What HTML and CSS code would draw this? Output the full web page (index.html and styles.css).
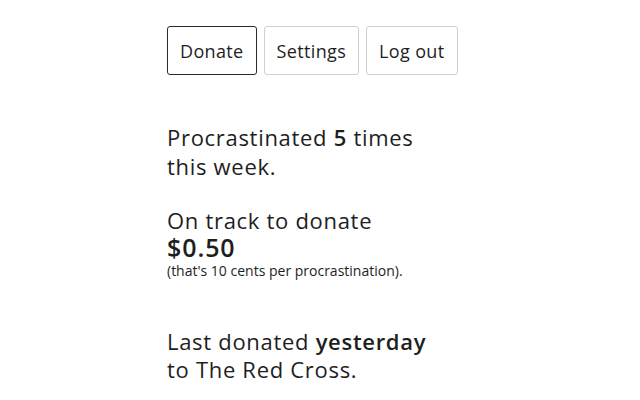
FILE: index.html
```html
<!DOCTYPE html>
<html>
<head>
<meta charset="utf-8">
<link rel="stylesheet" href="styles.css">
</head>
<body>
<div class="page">
  <nav class="actions">
    <button class="btn btn-primary">Donate</button>
    <button class="btn">Settings</button>
    <button class="btn">Log out</button>
  </nav>
  <p class="stat stat-week">Procrastinated <b>5</b> times<br>this week.</p>
  <div class="stat stat-track">
    <div class="track-label">On track to donate</div>
    <div class="amount">$0.50</div>
    <div class="note">(that's 10 cents per procrastination).</div>
  </div>
  <p class="stat stat-last">Last donated <b>yesterday</b><br>to The Red Cross.</p>
</div>
</body>
</html>
```
FILE: styles.css
```css
html, body {
  margin: 0;
  padding: 0;
  background: #fff;
}
body {
  font-family: "Open Sans", "Noto Sans", sans-serif;
  color: #1e1e1e;
}
.page {
  padding: 26px 0 0 167px;
}
.actions {
  display: flex;
  gap: 7px;
}
.btn {
  font-family: inherit;
  font-size: 18px;
  letter-spacing: 0.35px;
  color: #1e1e1e;
  background: #fff;
  height: 49px;
  padding: 0 12px;
  border: 1.5px solid #d0d0d0;
  border-radius: 3px;
}
.btn-primary {
  border-color: #2a2a2a;
}
.stat {
  margin: 0;
  font-size: 22px;
  letter-spacing: 0.7px;
  line-height: 29px;
}
.stat b {
  font-weight: 600;
}
.stat-week {
  margin-top: 48px;
}
.stat-track {
  margin-top: 26px;
}
.track-label {
  line-height: 26px;
}
.amount {
  font-size: 25px;
  font-weight: 600;
  letter-spacing: 0.9px;
  line-height: 28px;
}
.note {
  font-size: 14px;
  letter-spacing: 0;
  line-height: 20px;
}
.stat-last {
  margin-top: 46px;
  line-height: 28px;
}
```
